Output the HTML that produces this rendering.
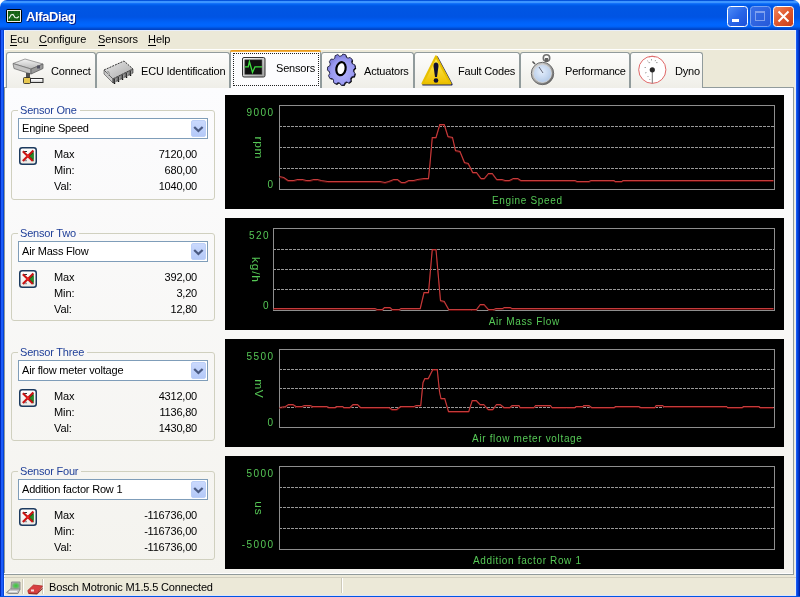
<!DOCTYPE html>
<html><head><meta charset="utf-8">
<style>
*{margin:0;padding:0;box-sizing:border-box}
html,body{width:800px;height:597px;overflow:hidden;background:#fff}
body{position:relative;will-change:transform;font-family:"Liberation Sans",sans-serif;font-size:11px;color:#000}
.a{position:absolute}
svg.a{overflow:visible}
#title{left:0;top:0;width:800px;height:30px;border-radius:7px 7px 0 0;
background:linear-gradient(to bottom,#0048d0 0px,#0a5fe8 1px,#3d95ff 1px,#3d95ff 3px,#1e7aff 3px,#0868f4 4px,#0060ee 5px,#0056e4 6px,#0054e3 17px,#0058ec 19px,#0062f7 22px,#0066ff 25px,#0060f4 27px,#0050d8 28px,#0040c0 30px)}
#ttext{left:26px;top:9px;font-weight:bold;font-size:13px;color:#fff;letter-spacing:-0.4px;text-shadow:1px 1px 0 #0a1e8a}
.bl{background:#0055e5}
.menu span.m{position:absolute;top:33px;letter-spacing:-0.05px}
.u{display:inline-block;border-bottom:1px solid #000;line-height:10px;height:12px}
.tab{position:absolute;top:52px;height:36px;border:1px solid #919b9c;border-bottom:none;border-radius:3px 3px 0 0;
background:linear-gradient(to bottom,#fdfdfc,#efeee8)}
.tab .t{position:absolute;top:12px;letter-spacing:-0.2px;white-space:nowrap}
#page{left:4px;top:87px;width:790px;height:488px;border:1px solid #919b9c;
background:linear-gradient(to bottom,#fcfcfe 0%,#f4f3ee 100%)}
.gb{position:absolute;left:11px;width:204px;border:1px solid #d0d0bf;border-radius:3px}
.cap{position:absolute;left:18px;color:#1f3f98;padding:0 3px 0 2px;line-height:11px;letter-spacing:-0.2px;white-space:nowrap}
.combo{position:absolute;left:18px;width:190px;height:21px;border:1px solid #7f9db9;background:#fff}
.combo .t{position:absolute;left:3px;top:3px;letter-spacing:-0.2px;white-space:nowrap}
.combo .btn{position:absolute;right:1px;top:1px;width:15px;height:17px;border-radius:2px;
background:linear-gradient(to bottom,#cad9fd,#b4c9f8);border:1px solid #bccff7}
.lbl{position:absolute;left:54px;letter-spacing:-0.1px}
.val{position:absolute;right:603px;text-align:right;letter-spacing:-0.2px;white-space:nowrap}
.xb{position:absolute;left:19px;width:18px;height:18px}
svg text{font-family:"Liberation Sans",sans-serif}
</style></head><body>
<div id="title" class="a"></div>
<!-- title icon -->
<svg class="a" style="left:6px;top:9px" width="16" height="14">
<rect x="0" y="0" width="16" height="14" rx="2" fill="#000"/>
<rect x="1.5" y="1.5" width="13" height="11" fill="none" stroke="#f0f0e8" stroke-width="1"/>
<rect x="2" y="2" width="12" height="10" fill="#155e15"/>
<path d="M2.5 5.5 h11 M2.5 8.5 h11 M5.5 2.5 v9 M8.5 2.5 v9 M11.5 2.5 v9" stroke="#2a8a2a" stroke-width="0.6" stroke-dasharray="1 1"/>
<path d="M3 9.5 L5 6 L7 5.5 L9 8.5 L11 9 L13 7.5" stroke="#f0f8f0" stroke-width="1.1" fill="none"/>
</svg>
<div id="ttext" class="a">AlfaDiag</div>
<!-- window buttons -->
<svg class="a" style="left:727px;top:6px" width="67" height="21">
<defs>
<linearGradient id="gmin" x1="0" y1="0" x2="1" y2="1"><stop offset="0" stop-color="#4f8df8"/><stop offset="0.5" stop-color="#2966e8"/><stop offset="1" stop-color="#1c4fd8"/></linearGradient>
<linearGradient id="gmax" x1="0" y1="0" x2="1" y2="1"><stop offset="0" stop-color="#3a70e8"/><stop offset="1" stop-color="#2558d8"/></linearGradient>
<linearGradient id="gcl" x1="0" y1="0" x2="1" y2="1"><stop offset="0" stop-color="#f08a60"/><stop offset="0.5" stop-color="#e0582e"/><stop offset="1" stop-color="#c83c18"/></linearGradient>
</defs>
<rect x="0.5" y="0.5" width="20" height="20" rx="3" fill="url(#gmin)" stroke="#fff"/>
<rect x="5" y="13" width="7" height="3" fill="#fff"/>
<rect x="23.5" y="0.5" width="20" height="20" rx="3" fill="url(#gmax)" stroke="#78a2f2"/>
<rect x="28.5" y="5.5" width="9" height="9" fill="none" stroke="#7fa0ee"/>
<rect x="28" y="5" width="10" height="2" fill="#7fa0ee"/>
<rect x="46.5" y="0.5" width="20" height="20" rx="3" fill="url(#gcl)" stroke="#fff"/>
<path d="M51.5 5.5 L61.5 15.5 M61.5 5.5 L51.5 15.5" stroke="#fff" stroke-width="2"/>
</svg>
<!-- borders -->
<div class="a" style="left:0;top:30px;width:1px;height:567px;background:#0028b8"></div><div class="a" style="left:1px;top:30px;width:2px;height:567px;background:#1c5cfa"></div><div class="a" style="left:3px;top:30px;width:1px;height:567px;background:#0444d4"></div>
<div class="a" style="left:796px;top:30px;width:1px;height:567px;background:#1a5af4"></div><div class="a" style="left:797px;top:30px;width:1px;height:567px;background:#0448e0"></div><div class="a" style="left:798px;top:30px;width:1px;height:567px;background:#0038c8"></div><div class="a" style="left:799px;top:30px;width:1px;height:567px;background:#0020a8"></div>
<div class="a" style="left:4px;top:30px;width:792px;height:566px;background:#ece9d8"></div><div class="a" style="left:795px;top:30px;width:1px;height:566px;background:#e4ecfc"></div>
<div class="a" style="left:4px;top:30px;width:1px;height:566px;background:#f6f8ff"></div>
<div class="a" style="left:4px;top:30px;width:792px;height:1px;background:#e8eefc"></div>
<div class="a bl" style="left:0;top:596px;width:800px;height:1px"></div>
<div class="a" style="left:4px;top:595px;width:792px;height:1px;background:#dde6fa"></div>
<div class="a" style="left:4px;top:49px;width:792px;height:1px;background:#fff"></div>
<!-- menu -->
<div class="menu">
<span class="m" style="left:10px"><span class="u">E</span>cu</span>
<span class="m" style="left:39px"><span class="u">C</span>onfigure</span>
<span class="m" style="left:98px"><span class="u">S</span>ensors</span>
<span class="m" style="left:148px"><span class="u">H</span>elp</span>
</div>
<!-- page -->
<div id="page" class="a"></div>
<!-- tabs -->
<div class="tab" style="left:6px;width:90px"><span class="t" style="left:44px">Connect</span>
<svg class="a" style="left:5px;top:5px" width="32" height="26">
<defs><linearGradient id="gd" x1="0" y1="0" x2="0" y2="1"><stop offset="0" stop-color="#f4f4f4"/><stop offset="1" stop-color="#b8b8b8"/></linearGradient></defs>
<path d="M1 5.5 L13 1 L31 6 L19 11 Z" fill="url(#gd)" stroke="#8a8a8a" stroke-width="0.8"/>
<path d="M1 5.5 L19 11 L19 16 L2 10.5 Z" fill="#c4c4c4" stroke="#707070" stroke-width="0.8"/>
<path d="M19 11 L31 6 L31 10.5 L19 16 Z" fill="#9a9a9a" stroke="#606060" stroke-width="0.8"/>
<rect x="25" y="7.5" width="3" height="3" fill="#505060"/>
<rect x="14" y="15" width="4" height="5" fill="#505050"/>
<rect x="11.5" y="19.5" width="7" height="6" rx="1" fill="#e8c850" stroke="#202020" stroke-width="0.8"/>
<rect x="18.5" y="20.5" width="12.5" height="4" fill="#d8d8d8" stroke="#303030" stroke-width="1"/>
<rect x="19" y="21" width="11" height="1.5" fill="#fff"/>
</svg></div>
<div class="tab" style="left:96px;width:134px"><span class="t" style="left:44px">ECU Identification</span>
<svg class="a" style="left:6px;top:7px" width="32" height="26">
<defs><linearGradient id="gc" x1="0" y1="0" x2="1" y2="1"><stop offset="0" stop-color="#e8e8e8"/><stop offset="1" stop-color="#a8a8a8"/></linearGradient></defs>
<path d="M1 10 L21 1 L30 9 L10 19 Z" fill="url(#gc)" stroke="#202020" stroke-width="0.9" stroke-dasharray="2 1"/>
<path d="M1 10 L10 19 L10 23 L1 14 Z" fill="#c8c8c8" stroke="#404040" stroke-width="0.6"/>
<path d="M10 19 L30 9 L30 13 L10 23 Z" fill="#888" stroke="#303030" stroke-width="0.6"/>
<path d="M11.5 19 v5 M15.5 17 v5 M19.5 15 v5 M23.5 13 v5 M27.5 11 v5" stroke="#101010" stroke-width="1.4"/>
<path d="M12.2 19 v4 M16.2 17 v4 M20.2 15 v4 M24.2 13 v4 M28.2 11 v4" stroke="#e0e0e0" stroke-width="0.6"/>
<path d="M4 12 Q6 11 6 13 L6 16" stroke="#707070" stroke-width="0.8" fill="#f0f0f0"/>
</svg></div>
<div class="tab" style="left:321px;width:93px"><span class="t" style="left:42px">Actuators</span>
<svg class="a" style="left:5px;top:1px" width="32" height="34">
<defs><radialGradient id="gg" cx="0.55" cy="0.6" r="0.6"><stop offset="0" stop-color="#b4b4ff"/><stop offset="0.7" stop-color="#9898f0"/><stop offset="1" stop-color="#7a7ad8"/></radialGradient></defs>
<g transform="translate(14.4,15.6)">
<path d="M0.00 -13.60 L1.44 -15.52 L4.33 -14.84 L4.94 -12.43 L6.60 -11.44 L8.74 -12.19 L10.84 -9.87 L10.19 -7.48 L11.10 -5.65 L13.26 -4.99 L13.91 -1.78 L12.20 -0.16 L12.08 1.94 L13.58 3.79 L12.56 6.88 L10.34 7.22 L9.22 8.91 L9.58 11.37 L7.23 13.36 L5.19 12.31 L3.44 13.05 L2.54 15.34 L-0.40 15.59 L-1.60 13.48 L-3.44 13.05 L-5.30 14.44 L-7.90 12.88 L-7.88 10.38 L-9.22 8.91 L-11.47 8.95 L-12.90 6.07 L-11.67 3.98 L-12.08 1.94 L-13.99 0.62 L-13.79 -2.66 L-11.74 -3.68 L-11.10 -5.65 L-12.07 -7.90 L-10.31 -10.55 L-8.09 -10.18 L-6.60 -11.44 L-6.32 -13.92 L-3.56 -15.09 L-1.87 -13.44 Z" fill="#000" transform="translate(0.9,0.9)"/>
<path d="M0.00 -13.60 L1.44 -15.52 L4.33 -14.84 L4.94 -12.43 L6.60 -11.44 L8.74 -12.19 L10.84 -9.87 L10.19 -7.48 L11.10 -5.65 L13.26 -4.99 L13.91 -1.78 L12.20 -0.16 L12.08 1.94 L13.58 3.79 L12.56 6.88 L10.34 7.22 L9.22 8.91 L9.58 11.37 L7.23 13.36 L5.19 12.31 L3.44 13.05 L2.54 15.34 L-0.40 15.59 L-1.60 13.48 L-3.44 13.05 L-5.30 14.44 L-7.90 12.88 L-7.88 10.38 L-9.22 8.91 L-11.47 8.95 L-12.90 6.07 L-11.67 3.98 L-12.08 1.94 L-13.99 0.62 L-13.79 -2.66 L-11.74 -3.68 L-11.10 -5.65 L-12.07 -7.90 L-10.31 -10.55 L-8.09 -10.18 L-6.60 -11.44 L-6.32 -13.92 L-3.56 -15.09 L-1.87 -13.44 Z" fill="url(#gg)" stroke="#202040" stroke-width="0.9"/>
<ellipse cx="-0.6" cy="-0.8" rx="4.6" ry="6.6" fill="#fff" stroke="#000" stroke-width="2.2" transform="rotate(12)"/>
</g></svg></div>
<div class="tab" style="left:414px;width:106px"><span class="t" style="left:43px">Fault Codes</span>
<svg class="a" style="left:6px;top:1px" width="32" height="33">
<defs><linearGradient id="gy" x1="0" y1="0" x2="0" y2="1"><stop offset="0" stop-color="#fff060"/><stop offset="1" stop-color="#f0c000"/></linearGradient></defs>
<path d="M15 2.5 L29.5 29.5 L1.5 29.5 Z" fill="#1c2060" stroke="#1c2060" stroke-width="2.4" stroke-linejoin="round" transform="translate(0.9,0.9)"/>
<path d="M15 2.5 L29.5 29.5 L1.5 29.5 Z" fill="url(#gy)" stroke="#e8c000" stroke-width="2.2" stroke-linejoin="round"/>
<path d="M12.5 12 Q12.5 8.5 15 8.5 Q17.5 8.5 17.5 12 L16 23 L14 23 Z" fill="#101030"/>
<circle cx="15" cy="26.5" r="2.3" fill="#101030"/>
</svg></div>
<div class="tab" style="left:520px;width:110px"><span class="t" style="left:44px">Performance</span>
<svg class="a" style="left:8px;top:-1px" width="28" height="34">
<defs><radialGradient id="gw" cx="0.45" cy="0.4" r="0.6"><stop offset="0" stop-color="#e4eefc"/><stop offset="1" stop-color="#b4cae8"/></radialGradient></defs>
<circle cx="17.5" cy="6" r="3.2" fill="none" stroke="#707070" stroke-width="1.6"/>
<rect x="16" y="6" width="3" height="4" fill="#606060"/>
<path d="M3.5 9.5 L6 12" stroke="#505050" stroke-width="1.5"/>
<defs><linearGradient id="gr" x1="0" y1="0" x2="1" y2="1"><stop offset="0" stop-color="#e0e0e0"/><stop offset="0.5" stop-color="#a8a8a8"/><stop offset="1" stop-color="#505050"/></linearGradient></defs><circle cx="13.5" cy="21.5" r="11.2" fill="url(#gr)" stroke="#6a6a6a" stroke-width="1"/>
<circle cx="13.5" cy="21.5" r="9" fill="url(#gw)" stroke="#d8d8d8" stroke-width="0.8"/>
<path d="M10 15 L14 21" stroke="#404050" stroke-width="0.8"/>
</svg></div>
<div class="tab" style="left:630px;width:73px"><span class="t" style="left:44px">Dyno</span>
<svg class="a" style="left:6px;top:2px" width="30" height="30">
<circle cx="15.3" cy="14.8" r="13.6" fill="#fff" stroke="#e06868" stroke-width="1"/>
<path d="M15.3 17 L15.3 28.4" stroke="#686868" stroke-width="0.9"/>
<circle cx="15.3" cy="14.8" r="2.6" fill="#282828"/>
<path d="M11.5 7.6 h1.6 M19 7.6 h1.6 M7.5 12.5 h1.5 M8 18 l1.5 -0.5 M10.5 22 l1 -1 M12.5 25 l0.5 -1 M14.5 4 v1.5 M18.5 5 l-0.3 1.2 M10.5 5.5 l0.5 1" stroke="#9a9a9a" stroke-width="0.9"/>
<path d="M12 1.8 Q15 1 18 1.8" stroke="#e07070" stroke-width="1" fill="none"/>
</svg></div>
<div class="tab" style="left:230px;top:50px;width:91px;height:38px;border-top:none;background:#fcfcfe">
 <div class="a" style="left:-1px;top:0;width:91px;height:2px;background:#f6b040;border-radius:3px 3px 0 0;border-top:1px solid #e69a20"></div>
 <div class="a" style="left:2px;top:3px;width:86px;height:33px;border:1px dotted #202020"></div>
 <span class="t" style="left:45px;top:12px">Sensors</span>
<svg class="a" style="left:11px;top:7px" width="24" height="21">
<defs><linearGradient id="gm" x1="0" y1="0" x2="1" y2="1"><stop offset="0" stop-color="#f8f8f8"/><stop offset="1" stop-color="#a0a0a0"/></linearGradient></defs>
<rect x="0.5" y="0.5" width="22.5" height="19.5" rx="1.5" fill="url(#gm)" stroke="#303030" stroke-width="1"/>
<rect x="2.8" y="2.8" width="17.2" height="14.6" fill="#101010" stroke="#606060" stroke-width="0.6"/>
<path d="M2.8 9.8 H6.2 L7.4 4.6 L10.5 15.4 L13 9.8 H20" stroke="#40e040" stroke-width="1.3" fill="none"/>
</svg>
</div>

<div class="gb" style="top:110px;height:90px"></div>
<div class="cap" style="top:105px;background:#fcfcfd">Sensor One</div>
<div class="combo" style="top:118px"><span class="t">Engine Speed</span><div class="btn"><svg width="14" height="15" style="position:absolute;left:0;top:0"><path d="M2.2 6 L6.4 10 L10.6 6" stroke="#4a5a82" stroke-width="2.3" fill="none"/></svg></div></div>
<svg class="xb a" style="top:147px" width="18" height="18"><defs><linearGradient id="xg110" x1="0" y1="0" x2="0" y2="1"><stop offset="0" stop-color="#fff"/><stop offset="1" stop-color="#ecebe6"/></linearGradient></defs><rect x="0.75" y="0.75" width="16.5" height="16.5" rx="2.5" fill="url(#xg110)" stroke="#1c3a5e" stroke-width="1.5"/><path d="M8.5 9.2 L14.6 4.2 L14.6 14.4 Z" fill="#0e5a0e"/><path d="M10.5 9.2 L14.6 6 L14.6 12.6 Z" fill="#2a8a2a"/><path d="M5 4.5 h3" stroke="#303030" stroke-width="1"/><path d="M5 13.5 h3" stroke="#909098" stroke-width="1.5"/><path d="M3.8 4.2 L13.8 14 M14.4 3.6 L3.8 14" stroke="#c81414" stroke-width="2.1"/><circle cx="8.8" cy="9" r="1.4" fill="#f02020"/></svg>
<div class="lbl" style="top:148px">Max</div>
<div class="val" style="top:148px">7120,00</div>
<div class="lbl" style="top:164px">Min:</div>
<div class="val" style="top:164px">680,00</div>
<div class="lbl" style="top:180px">Val:</div>
<div class="val" style="top:180px">1040,00</div>
<div class="gb" style="top:233px;height:88px"></div>
<div class="cap" style="top:228px;background:#faf9f9">Sensor Two</div>
<div class="combo" style="top:241px"><span class="t">Air Mass Flow</span><div class="btn"><svg width="14" height="15" style="position:absolute;left:0;top:0"><path d="M2.2 6 L6.4 10 L10.6 6" stroke="#4a5a82" stroke-width="2.3" fill="none"/></svg></div></div>
<svg class="xb a" style="top:270px" width="18" height="18"><defs><linearGradient id="xg233" x1="0" y1="0" x2="0" y2="1"><stop offset="0" stop-color="#fff"/><stop offset="1" stop-color="#ecebe6"/></linearGradient></defs><rect x="0.75" y="0.75" width="16.5" height="16.5" rx="2.5" fill="url(#xg233)" stroke="#1c3a5e" stroke-width="1.5"/><path d="M8.5 9.2 L14.6 4.2 L14.6 14.4 Z" fill="#0e5a0e"/><path d="M10.5 9.2 L14.6 6 L14.6 12.6 Z" fill="#2a8a2a"/><path d="M5 4.5 h3" stroke="#303030" stroke-width="1"/><path d="M5 13.5 h3" stroke="#909098" stroke-width="1.5"/><path d="M3.8 4.2 L13.8 14 M14.4 3.6 L3.8 14" stroke="#c81414" stroke-width="2.1"/><circle cx="8.8" cy="9" r="1.4" fill="#f02020"/></svg>
<div class="lbl" style="top:271px">Max</div>
<div class="val" style="top:271px">392,00</div>
<div class="lbl" style="top:287px">Min:</div>
<div class="val" style="top:287px">3,20</div>
<div class="lbl" style="top:303px">Val:</div>
<div class="val" style="top:303px">12,80</div>
<div class="gb" style="top:352px;height:89px"></div>
<div class="cap" style="top:347px;background:#f8f7f5">Sensor Three</div>
<div class="combo" style="top:360px"><span class="t">Air flow meter voltage</span><div class="btn"><svg width="14" height="15" style="position:absolute;left:0;top:0"><path d="M2.2 6 L6.4 10 L10.6 6" stroke="#4a5a82" stroke-width="2.3" fill="none"/></svg></div></div>
<svg class="xb a" style="top:389px" width="18" height="18"><defs><linearGradient id="xg352" x1="0" y1="0" x2="0" y2="1"><stop offset="0" stop-color="#fff"/><stop offset="1" stop-color="#ecebe6"/></linearGradient></defs><rect x="0.75" y="0.75" width="16.5" height="16.5" rx="2.5" fill="url(#xg352)" stroke="#1c3a5e" stroke-width="1.5"/><path d="M8.5 9.2 L14.6 4.2 L14.6 14.4 Z" fill="#0e5a0e"/><path d="M10.5 9.2 L14.6 6 L14.6 12.6 Z" fill="#2a8a2a"/><path d="M5 4.5 h3" stroke="#303030" stroke-width="1"/><path d="M5 13.5 h3" stroke="#909098" stroke-width="1.5"/><path d="M3.8 4.2 L13.8 14 M14.4 3.6 L3.8 14" stroke="#c81414" stroke-width="2.1"/><circle cx="8.8" cy="9" r="1.4" fill="#f02020"/></svg>
<div class="lbl" style="top:390px">Max</div>
<div class="val" style="top:390px">4312,00</div>
<div class="lbl" style="top:406px">Min:</div>
<div class="val" style="top:406px">1136,80</div>
<div class="lbl" style="top:422px">Val:</div>
<div class="val" style="top:422px">1430,80</div>
<div class="gb" style="top:471px;height:89px"></div>
<div class="cap" style="top:466px;background:#f6f5f1">Sensor Four</div>
<div class="combo" style="top:479px"><span class="t">Addition factor Row 1</span><div class="btn"><svg width="14" height="15" style="position:absolute;left:0;top:0"><path d="M2.2 6 L6.4 10 L10.6 6" stroke="#4a5a82" stroke-width="2.3" fill="none"/></svg></div></div>
<svg class="xb a" style="top:508px" width="18" height="18"><defs><linearGradient id="xg471" x1="0" y1="0" x2="0" y2="1"><stop offset="0" stop-color="#fff"/><stop offset="1" stop-color="#ecebe6"/></linearGradient></defs><rect x="0.75" y="0.75" width="16.5" height="16.5" rx="2.5" fill="url(#xg471)" stroke="#1c3a5e" stroke-width="1.5"/><path d="M8.5 9.2 L14.6 4.2 L14.6 14.4 Z" fill="#0e5a0e"/><path d="M10.5 9.2 L14.6 6 L14.6 12.6 Z" fill="#2a8a2a"/><path d="M5 4.5 h3" stroke="#303030" stroke-width="1"/><path d="M5 13.5 h3" stroke="#909098" stroke-width="1.5"/><path d="M3.8 4.2 L13.8 14 M14.4 3.6 L3.8 14" stroke="#c81414" stroke-width="2.1"/><circle cx="8.8" cy="9" r="1.4" fill="#f02020"/></svg>
<div class="lbl" style="top:509px">Max</div>
<div class="val" style="top:509px">-116736,00</div>
<div class="lbl" style="top:525px">Min:</div>
<div class="val" style="top:525px">-116736,00</div>
<div class="lbl" style="top:541px">Val:</div>
<div class="val" style="top:541px">-116736,00</div>
<svg class="a" style="left:225px;top:95px" width="559" height="114">
<rect x="0" y="0" width="559" height="114" fill="#000"/>
<line x1="54" y1="31.5" x2="549.5" y2="31.5" stroke="#989898" stroke-dasharray="3 1"/>
<line x1="54" y1="52.5" x2="549.5" y2="52.5" stroke="#989898" stroke-dasharray="3 1"/>
<line x1="54" y1="73.5" x2="549.5" y2="73.5" stroke="#989898" stroke-dasharray="3 1"/>
<rect x="54.5" y="10.5" width="495.0" height="84.0" fill="none" stroke="#8e8e8e"/>
<polyline points="54.50,82.50 58.75,83.50 63.00,86.50 68.75,86.50 72.50,85.50 77.50,85.50 81.25,86.50 85.00,86.50 88.75,85.50 92.50,85.50 96.25,86.50 102.50,87.50 155.00,87.50 160.00,88.50 163.75,87.50 168.75,85.50 172.50,85.50 176.25,88.50 180.00,88.50 183.75,86.50 188.75,86.50 192.50,85.50 199.00,84.50 203.50,84.50 205.00,69.50 207.25,43.50 211.00,43.50 214.75,30.50 219.25,30.50 223.00,42.50 227.50,43.50 230.50,56.50 235.00,57.50 239.50,68.50 243.25,69.50 247.75,78.50 251.50,78.50 256.00,84.50 259.30,84.50 263.50,79.50 267.25,79.50 271.75,85.50 277.00,85.50 280.00,86.50 284.50,86.50 288.25,84.50 292.75,84.50 295.75,86.50 350.00,86.50 352.00,87.50 364.00,87.50 366.00,86.50 389.00,86.50 390.00,87.50 397.00,87.50 398.00,86.50 548.50,86.50" fill="none" stroke="#5a0808" stroke-width="1"/>
<polyline points="54.50,81.50 58.75,82.50 63.00,85.50 68.75,85.50 72.50,84.50 77.50,84.50 81.25,85.50 85.00,85.50 88.75,84.50 92.50,84.50 96.25,85.50 102.50,86.50 155.00,86.50 160.00,87.50 163.75,86.50 168.75,84.50 172.50,84.50 176.25,87.50 180.00,87.50 183.75,85.50 188.75,85.50 192.50,84.50 199.00,83.50 203.50,83.50 205.00,68.50 207.25,42.50 211.00,42.50 214.75,29.50 219.25,29.50 223.00,41.50 227.50,42.50 230.50,55.50 235.00,56.50 239.50,67.50 243.25,68.50 247.75,77.50 251.50,77.50 256.00,83.50 259.30,83.50 263.50,78.50 267.25,78.50 271.75,84.50 277.00,84.50 280.00,85.50 284.50,85.50 288.25,83.50 292.75,83.50 295.75,85.50 350.00,85.50 352.00,86.50 364.00,86.50 366.00,85.50 389.00,85.50 390.00,86.50 397.00,86.50 398.00,85.50 548.50,85.50" fill="none" stroke="#c43c3c" stroke-width="1.1"/>
<text x="49.4" y="20.5" fill="#56c856" font-size="10" letter-spacing="1.4" text-anchor="end">9000</text>
<text x="49.4" y="92.5" fill="#56c856" font-size="10" letter-spacing="1.4" text-anchor="end">0</text>
<text transform="translate(30,52.85) rotate(90) scale(1.2,1)" x="0" y="0" fill="#56c856" font-size="10" letter-spacing="0.6" text-anchor="middle">rpm</text>
<text x="302.3" y="108.5" fill="#56c856" font-size="10" letter-spacing="0.65" text-anchor="middle">Engine Speed</text>
</svg>
<svg class="a" style="left:225px;top:218px" width="559" height="112">
<rect x="0" y="0" width="559" height="112" fill="#000"/>
<line x1="48" y1="31.5" x2="549.5" y2="31.5" stroke="#989898" stroke-dasharray="3 1"/>
<line x1="48" y1="51.5" x2="549.5" y2="51.5" stroke="#989898" stroke-dasharray="3 1"/>
<line x1="48" y1="71.5" x2="549.5" y2="71.5" stroke="#989898" stroke-dasharray="3 1"/>
<rect x="48.5" y="10.5" width="501.0" height="82.0" fill="none" stroke="#8e8e8e"/>
<polyline points="48.50,91.50 150.00,91.50 152.00,92.50 157.50,92.50 159.50,90.50 165.00,90.50 167.00,92.50 174.50,92.50 176.00,91.50 195.25,91.50 199.00,75.50 203.50,75.50 207.25,32.50 211.00,32.50 215.50,83.50 219.25,84.50 223.75,92.50 246.25,92.50 247.00,92.50 251.50,92.50 255.25,87.50 259.00,87.50 263.50,92.50 268.75,92.50 271.00,91.50 277.75,91.50 279.25,90.50 285.25,90.50 286.75,91.50 548.50,91.50" fill="none" stroke="#5a0808" stroke-width="1"/>
<polyline points="48.50,90.50 150.00,90.50 152.00,91.50 157.50,91.50 159.50,89.50 165.00,89.50 167.00,91.50 174.50,91.50 176.00,90.50 195.25,90.50 199.00,74.50 203.50,74.50 207.25,31.50 211.00,31.50 215.50,82.50 219.25,83.50 223.75,91.50 246.25,91.50 247.00,91.50 251.50,91.50 255.25,86.50 259.00,86.50 263.50,91.50 268.75,91.50 271.00,90.50 277.75,90.50 279.25,89.50 285.25,89.50 286.75,90.50 548.50,90.50" fill="none" stroke="#c43c3c" stroke-width="1.1"/>
<text x="44.9" y="20.5" fill="#56c856" font-size="10" letter-spacing="1.4" text-anchor="end">520</text>
<text x="44.9" y="90.5" fill="#56c856" font-size="10" letter-spacing="1.4" text-anchor="end">0</text>
<text transform="translate(27,51.85) rotate(90) scale(1.2,1)" x="0" y="0" fill="#56c856" font-size="10" letter-spacing="0.6" text-anchor="middle">kg/h</text>
<text x="299.3" y="106.5" fill="#56c856" font-size="10" letter-spacing="0.65" text-anchor="middle">Air Mass Flow</text>
</svg>
<svg class="a" style="left:225px;top:339px" width="559" height="108">
<rect x="0" y="0" width="559" height="108" fill="#000"/>
<line x1="54" y1="30.5" x2="549.5" y2="30.5" stroke="#989898" stroke-dasharray="3 1"/>
<line x1="54" y1="49.5" x2="549.5" y2="49.5" stroke="#989898" stroke-dasharray="3 1"/>
<line x1="54" y1="68.5" x2="549.5" y2="68.5" stroke="#989898" stroke-dasharray="3 1"/>
<rect x="54.5" y="10.5" width="495.0" height="78.0" fill="none" stroke="#8e8e8e"/>
<polyline points="54.50,69.50 60.50,68.50 63.50,66.50 68.00,66.50 71.00,68.50 77.00,68.50 79.25,67.50 85.25,67.50 87.50,68.50 101.75,68.50 104.00,69.50 110.00,69.50 111.50,68.50 117.50,68.50 119.00,69.50 125.00,69.50 128.00,66.50 132.50,66.50 135.50,69.50 164.00,69.50 167.00,71.50 171.75,71.50 175.50,68.50 189.00,68.50 191.25,67.50 195.75,67.50 198.00,44.50 199.80,40.50 203.25,40.50 207.75,31.50 212.25,31.50 214.50,53.50 216.00,60.50 219.75,60.50 223.50,73.50 243.75,73.50 247.20,62.50 251.25,62.50 255.00,66.50 258.75,66.50 263.25,71.50 267.75,71.50 271.50,66.50 275.25,66.50 279.00,69.50 285.00,69.50 287.00,67.50 294.00,67.50 295.00,69.50 309.00,69.50 310.60,67.50 325.50,67.50 327.00,69.50 341.25,69.50 343.00,69.50 350.00,69.50 351.00,68.50 358.00,68.50 358.75,67.50 364.00,67.50 366.60,69.50 389.40,69.50 390.25,68.50 413.90,68.50 415.60,69.50 429.90,69.50 431.10,67.50 437.75,67.50 438.60,68.50 501.60,68.50 502.50,69.50 517.40,69.50 518.25,68.50 534.00,68.50 535.00,69.50 548.50,69.50" fill="none" stroke="#5a0808" stroke-width="1"/>
<polyline points="54.50,68.50 60.50,67.50 63.50,65.50 68.00,65.50 71.00,67.50 77.00,67.50 79.25,66.50 85.25,66.50 87.50,67.50 101.75,67.50 104.00,68.50 110.00,68.50 111.50,67.50 117.50,67.50 119.00,68.50 125.00,68.50 128.00,65.50 132.50,65.50 135.50,68.50 164.00,68.50 167.00,70.50 171.75,70.50 175.50,67.50 189.00,67.50 191.25,66.50 195.75,66.50 198.00,43.50 199.80,39.50 203.25,39.50 207.75,30.50 212.25,30.50 214.50,52.50 216.00,59.50 219.75,59.50 223.50,72.50 243.75,72.50 247.20,61.50 251.25,61.50 255.00,65.50 258.75,65.50 263.25,70.50 267.75,70.50 271.50,65.50 275.25,65.50 279.00,68.50 285.00,68.50 287.00,66.50 294.00,66.50 295.00,68.50 309.00,68.50 310.60,66.50 325.50,66.50 327.00,68.50 341.25,68.50 343.00,68.50 350.00,68.50 351.00,67.50 358.00,67.50 358.75,66.50 364.00,66.50 366.60,68.50 389.40,68.50 390.25,67.50 413.90,67.50 415.60,68.50 429.90,68.50 431.10,66.50 437.75,66.50 438.60,67.50 501.60,67.50 502.50,68.50 517.40,68.50 518.25,67.50 534.00,67.50 535.00,68.50 548.50,68.50" fill="none" stroke="#c43c3c" stroke-width="1.1"/>
<text x="49.4" y="20.5" fill="#56c856" font-size="10" letter-spacing="1.4" text-anchor="end">5500</text>
<text x="49.4" y="86.5" fill="#56c856" font-size="10" letter-spacing="1.4" text-anchor="end">0</text>
<text transform="translate(30,49.85) rotate(90) scale(1.2,1)" x="0" y="0" fill="#56c856" font-size="10" letter-spacing="0.6" text-anchor="middle">mV</text>
<text x="302.3" y="102.5" fill="#56c856" font-size="10" letter-spacing="0.65" text-anchor="middle">Air flow meter voltage</text>
</svg>
<svg class="a" style="left:225px;top:456px" width="559" height="113">
<rect x="0" y="0" width="559" height="113" fill="#000"/>
<line x1="54" y1="31.5" x2="549.5" y2="31.5" stroke="#989898" stroke-dasharray="3 1"/>
<line x1="54" y1="51.5" x2="549.5" y2="51.5" stroke="#989898" stroke-dasharray="3 1"/>
<line x1="54" y1="72.5" x2="549.5" y2="72.5" stroke="#989898" stroke-dasharray="3 1"/>
<rect x="54.5" y="10.5" width="495.0" height="83.0" fill="none" stroke="#8e8e8e"/>
<text x="49.4" y="20.5" fill="#56c856" font-size="10" letter-spacing="1.4" text-anchor="end">5000</text>
<text x="49.4" y="91.5" fill="#56c856" font-size="10" letter-spacing="1.4" text-anchor="end">-5000</text>
<text transform="translate(30,52.35) rotate(90) scale(1.2,1)" x="0" y="0" fill="#56c856" font-size="10" letter-spacing="0.6" text-anchor="middle">us</text>
<text x="302.3" y="107.5" fill="#56c856" font-size="10" letter-spacing="0.65" text-anchor="middle">Addition factor Row 1</text>
</svg>

<!-- status bar -->
<div class="a" style="left:4px;top:573px;width:789px;height:1px;background:#fefefe"></div>
<div class="a" style="left:4px;top:577px;width:792px;height:1px;background:#d2cfbf"></div>
<div class="a" style="left:22px;top:579px;width:2px;height:15px;background:#cdc9b9;border-right:1px solid #fff"></div>
<div class="a" style="left:42px;top:579px;width:2px;height:15px;background:#cdc9b9;border-right:1px solid #fff"></div>
<div class="a" style="left:341px;top:578px;width:2px;height:15px;background:#cdc9b9;border-right:1px solid #fff"></div>
<svg class="a" style="left:6px;top:581px" width="16" height="14">
<defs><radialGradient id="gl" cx="0.55" cy="0.5" r="0.5"><stop offset="0" stop-color="#30d030"/><stop offset="0.6" stop-color="#70b870"/><stop offset="1" stop-color="#a8b0a8"/></radialGradient></defs>
<path d="M5.5 1 L14 1 L14 8.5 L5 8.5 Z" fill="url(#gl)" stroke="#909090" stroke-width="1"/>
<path d="M0.5 11.5 L4.5 8 L14 8 L12 12.5 L3 12.5 Z" fill="#c8c8c8" stroke="#8a8a8a" stroke-width="1"/>
<path d="M3 10.5 h8" stroke="#f0f0f0" stroke-width="1"/>
</svg>
<svg class="a" style="left:27px;top:584px" width="17" height="11">
<path d="M0.8 6.5 L6.5 1 L15.5 2 L10 9.5 L1.5 9 Z" fill="#d84040" stroke="#b02828" stroke-width="0.8" stroke-linejoin="round"/>
<path d="M1.5 9 L10 9.5 L15.5 3.5 L15.5 5 L10 10.5 L1.5 10 Z" fill="#8a1818"/>
<rect x="4" y="5.5" width="3" height="2" fill="#f4d8d8"/>
</svg>
<div class="a" style="left:49px;top:581px;letter-spacing:-0.16px;white-space:nowrap">Bosch Motronic M1.5.5 Connected</div>
</body></html>
